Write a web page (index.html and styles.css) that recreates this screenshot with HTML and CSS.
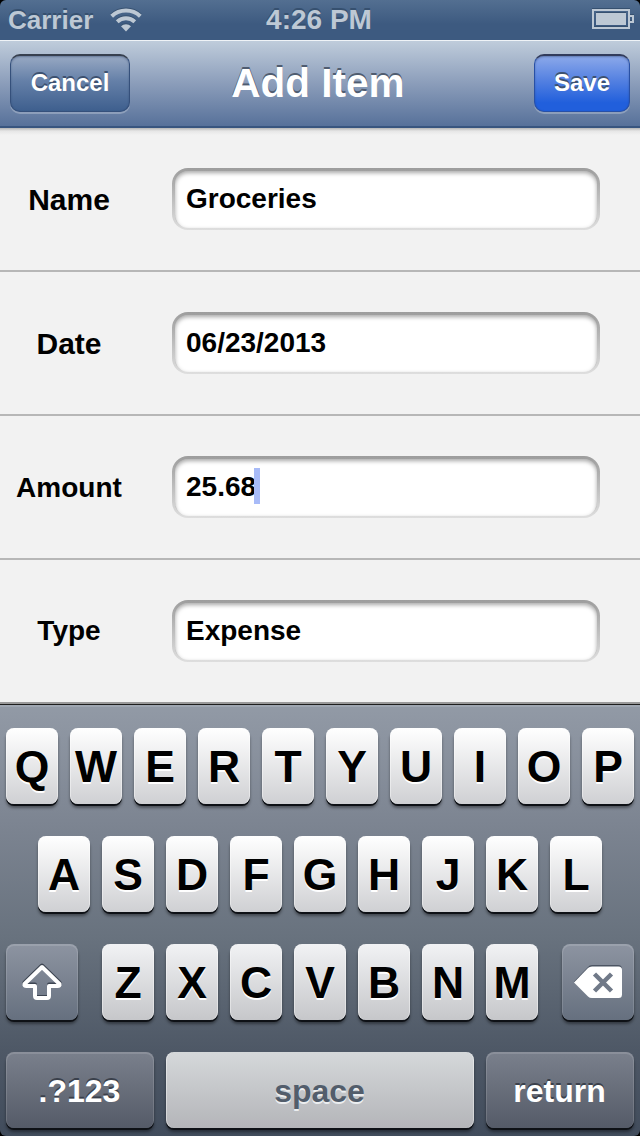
FILE: index.html
```html
<!DOCTYPE html>
<html lang="en">

<head>
    <meta charset="UTF-8">
    <meta name="viewport" content="width=device-width, initial-scale=1.0">
    <title>Add Item</title>
    <link rel="stylesheet" href="styles.css">
</head>

<body>
    <div id="screen">
        <div id="status-bar">
            <div class="carrier">
                <span>Carrier</span>
                <svg class="wifi" width="34" height="26" viewBox="0 0 34 26" fill="none" stroke="#bdc8d4">
                    <path d="M2.7 10.2A21 21 0 0 1 31.3 10.2" stroke-width="4" />
                    <path d="M8.2 15.8A13 13 0 0 1 25.8 15.8" stroke-width="4" />
                    <path d="M17 25.5L12 20.3A7 7 0 0 1 22 20.3Z" fill="#bdc8d4" stroke="none" />
                </svg>
            </div>
            <span class="time">4:26 PM</span>
            <svg class="battery" width="42" height="20" viewBox="0 0 42 20">
                <path d="M1 1H37V19H1ZM38 7H41V13H38" fill="none" stroke="#bdc8d4" stroke-width="2" />
                <rect x="4" y="4" width="30" height="12" fill="#bdc8d4" />
            </svg>
        </div>

        <div id="nav-bar">
            <button class="nav-btn cancel">Cancel</button>
            <h1>Add Item</h1>
            <button class="nav-btn save">Save</button>
        </div>

        <div id="form">
            <div class="row">
                <label class="large">Name</label>
                <div class="field"><span>Groceries</span></div>
            </div>
            <div class="row">
                <label class="large">Date</label>
                <div class="field"><span>06/23/2013</span></div>
            </div>
            <div class="row">
                <label>Amount</label>
                <div class="field"><span>25.68</span><i class="caret"></i></div>
            </div>
            <div class="row">
                <label>Type</label>
                <div class="field"><span>Expense</span></div>
            </div>
        </div>

        <div id="keyboard">
            <div class="keys">
                <div class="key">Q</div>
                <div class="key">W</div>
                <div class="key">E</div>
                <div class="key">R</div>
                <div class="key">T</div>
                <div class="key">Y</div>
                <div class="key">U</div>
                <div class="key">I</div>
                <div class="key">O</div>
                <div class="key">P</div>
            </div>
            <div class="keys">
                <div class="key">A</div>
                <div class="key">S</div>
                <div class="key">D</div>
                <div class="key">F</div>
                <div class="key">G</div>
                <div class="key">H</div>
                <div class="key">J</div>
                <div class="key">K</div>
                <div class="key">L</div>
            </div>
            <div class="keys lower">
                <div class="key dark shift">
                    <svg width="42" height="38" viewBox="0 0 42 38" fill="none" stroke-width="4" stroke-linejoin="round">
                        <path d="M21 2.500L38.500 19.500Q39 21.500 36.500 21.500H28V32Q28 34 26 34H16Q14 34 14 32V21.500H5.500Q3 21.500 3.500 19.500Z" stroke="#3d4552" />
                        <path d="M21 4L38.500 21Q39 23 36.500 23H28V33Q28 35 26 35H16Q14 35 14 33V23H5.500Q3 23 3.500 21Z" stroke="#fff" />
                    </svg>
                </div>
                <div class="key">Z</div>
                <div class="key">X</div>
                <div class="key">C</div>
                <div class="key">V</div>
                <div class="key">B</div>
                <div class="key">N</div>
                <div class="key">M</div>
                <div class="key dark delete">
                    <svg width="48" height="34" viewBox="0 0 48 34">
                        <path d="M0 16.500L14 2Q15.500 0 18 0H44Q48 0 48 4V29Q48 32 44 32H18Q15.500 32 14 30Z" fill="#4b5462" />
                        <path d="M0 17.500L14 3Q15.500 1.500 18 1.500H44.500Q48 1.500 48 5V29.500Q48 33 44.500 33H18Q15.500 33 14 31.500Z" fill="#fff" />
                        <path d="M20.500 9L37.500 26M37.500 9L20.500 26" stroke="#707988" stroke-width="4.500" />
                    </svg>
                </div>
            </div>
            <div class="keys bottom">
                <div class="key gray">.?123</div>
                <div class="key space">space</div>
                <div class="key gray">return</div>
            </div>
        </div>
    </div>
</body>

</html>
```

FILE: styles.css
```css
* {
    margin: 0;
    padding: 0;
    box-sizing: border-box;
}

body {
    background: #000;
    font-family: "Liberation Sans", Arial, Helvetica, sans-serif;
    font-weight: bold;
}

#screen {
    width: 640px;
    height: 1136px;
    display: flex;
    flex-direction: column;
    border-radius: 6px;
    overflow: hidden;
}

/* status bar */
#status-bar {
    height: 40px;
    padding: 0 6px 0 8px;
    display: grid;
    grid-template-columns: 1fr auto 1fr;
    align-items: center;
    background: linear-gradient(#536f91, #3d5a80 60%, #3d5a80);
    color: #bdc8d4;
    text-shadow: 0 -2px 0 #36506f;
}

.carrier {
    display: flex;
    align-items: center;
    gap: 16px;
    font-size: 26px;
}

.time {
    font-size: 28px;
    padding-right: 4px;
}

.battery {
    justify-self: end;
    margin-bottom: 2px;
}

.wifi {
    margin-bottom: 2px;
}

.wifi,
.battery {
    filter: drop-shadow(0 -1px 0 #36506f);
}

/* navigation bar */
#nav-bar {
    height: 88px;
    padding: 0 10px 1px;
    display: grid;
    grid-template-columns: 1fr auto 1fr;
    align-items: center;
    background: linear-gradient(#bfccdb, #8b9dba 50%, #57719a);
    border-top: 1px solid #eff3f7;
    border-bottom: 2px solid #38557f;
}

#nav-bar h1 {
    margin: 0 2px 0 -2px;
    font-size: 40.5px;
    line-height: 44px;
    color: #fff;
    text-shadow: 0 -2px 0 #4f5c70;
}

.nav-btn {
    height: 58px;
    padding-bottom: 2px;
    border: 1px solid #35507b;
    border-top: 2px solid #37404f;
    border-radius: 10px;
    font: bold 24px "Liberation Sans", Arial, sans-serif;
    color: #fff;
    text-shadow: 0 -2px 0 #3d5170;
    box-shadow: 0 2px 0 rgba(255, 255, 255, .25), inset 0 1px 2px rgba(30, 50, 90, .4);
}

.cancel {
    width: 120px;
    background: linear-gradient(#98a9c3, #6580a8 45%, #3e5f8e);
}

.save {
    width: 96px;
    justify-self: end;
    background: linear-gradient(#8ca9ea, #5380e1 45%, #215fdc 85%);
    border-color: #2850a6;
    border-top-color: #323c5c;
}

/* form */
#form {
    height: 576px;
    background: linear-gradient(#b5b5b5, #e6e6e6 3px, #f2f2f2 7px);
}

.row {
    height: 144px;
    padding: 40px 40px 0 0;
    display: flex;
    align-items: flex-start;
    border-bottom: 2px solid #b7b7b7;
}

.row:last-child {
    border-color: #9a9a9a;
}

.row label {
    width: 138px;
    margin-right: 34px;
    text-align: center;
    font-size: 28px;
    line-height: 64px;
}

.row:last-child label {
    line-height: 62px;
}

.row label.large {
    font-size: 30px;
}

.field {
    flex-grow: 1;
    height: 62px;
    padding: 0 11px 2px;
    display: flex;
    align-items: center;
    /* the rim fades from dark at the top to light at the bottom */
    border: 3px solid transparent;
    border-bottom-width: 2px;
    border-radius: 16px;
    background: linear-gradient(#fff, #fff) padding-box, linear-gradient(#9d9d9d, #c4c4c4 60%, #dedede) border-box;
    font-size: 28px;
    line-height: 36px;
    position: relative;
}

.field::after {
    content: "";
    position: absolute;
    inset: 0;
    border-radius: 13px;
    box-shadow: inset 0 2px 4px rgba(0, 0, 0, .35);
}

.caret {
    width: 6px;
    height: 36px;
    margin: 0 0 2px -2px;
    background: #a8bbf8;
}

/* keyboard */
#keyboard {
    height: 432px;
    padding: 23px 6px 0;
    display: flex;
    flex-direction: column;
    gap: 32px;
    border-top: 1px solid #1d1d1d;
    background: linear-gradient(#929aa6, #7c8491 28%, #68727e 54%, #4e5866 80%, #414c5c);
    box-shadow: inset 0 2px 0 #9ea6b1;
}

.keys {
    display: flex;
    justify-content: center;
    gap: 12px;
}

.key {
    width: 52px;
    height: 76px;
    display: flex;
    align-items: center;
    justify-content: center;
    padding-top: 1px;
    border-radius: 8px;
    background: linear-gradient(#fff, #cfd0d3);
    box-shadow: 0 2px 0 #0e1116, 0 4px 3px rgba(0, 0, 0, .4), inset 1px 0 0 rgba(255, 255, 255, .4), inset -1px 0 0 rgba(255, 255, 255, .4);
    font-size: 44.5px;
    color: #000;
    text-shadow: 0 2px 0 #fff;
}

.lower .key {
    background: linear-gradient(#f1f2f4, #c6c7ca);
}

.lower .dark {
    width: 72px;
    padding: 0;
    background: linear-gradient(#8d94a1, #66707f);
    box-shadow: 0 2px 0 #0e1116, 0 4px 3px rgba(0, 0, 0, .4), inset 0 1px 0 1px rgba(255, 255, 255, .13);
}

.shift {
    margin-right: 12px;
}

.delete {
    margin-left: 12px;
}

.bottom .key {
    padding: 2px 1px 0 0;
    font-size: 32px;
}

.bottom .gray {
    width: 148px;
    background: linear-gradient(#7a808c, #555b68);
    box-shadow: 0 2px 0 #0e1116, 0 4px 3px rgba(0, 0, 0, .4), inset 0 1px 0 1px rgba(255, 255, 255, .13);
    color: #fff;
    text-shadow: 0 -2px 0 #3a404b;
}

.bottom .space {
    width: 308px;
    background: linear-gradient(#d5d8da, #b4b5b9);
    color: #525d6b;
    text-shadow: 0 2px 0 #eceef0;
}
```
